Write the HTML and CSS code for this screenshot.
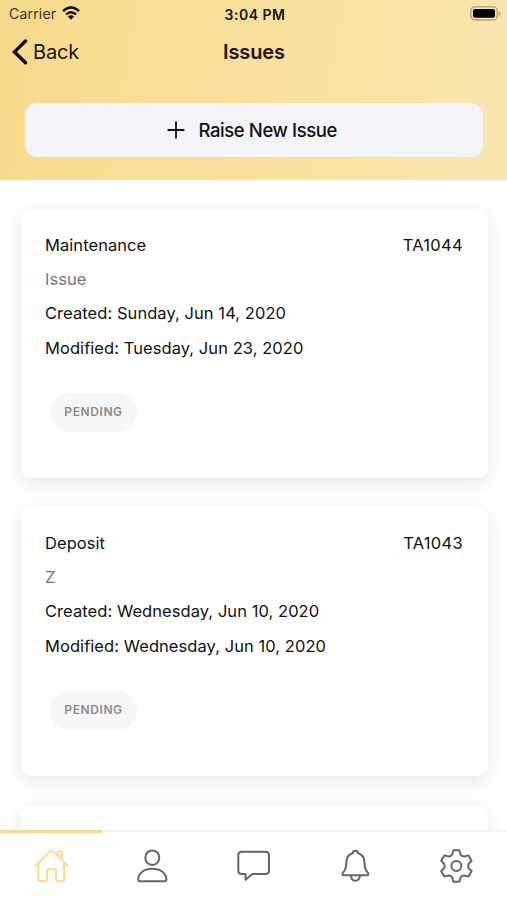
FILE: index.html
```html
<!DOCTYPE html>
<html lang="en">
<head>
<meta charset="utf-8">
<title>Issues</title>
<link rel="stylesheet" href="styles.css">
</head>
<body>
<div class="app">
  <header class="header">
    <div class="status">
      <div class="carrier"><span>Carrier</span>
        <svg width="18" height="14" viewBox="0 0 18 14"><g fill="none" stroke="#080600" stroke-width="2.5"><path d="M1 5.1Q9-2.1 17 5.1"/><path d="M4 8.4Q9 4 14 8.4"/></g><path d="M6 10.6Q9 8 12 10.6L9 13.7Z" fill="#080600"/></svg>
      </div>
      <div class="time">3:04 PM</div>
      <svg class="battery" width="31" height="15" viewBox="0 0 31 15"><rect x=".8" y=".8" width="26.4" height="13.2" rx="4" fill="none" stroke="#b3a477" stroke-width="1.3"/><rect x="3" y="3" width="22" height="8.8" rx="2" fill="#000"/><path d="M28.5 5.2Q30.5 6 30.5 7.4T28.5 9.6Z" fill="#b3a477"/></svg>
    </div>
    <div class="titlebar">
      <div class="back">
        <svg width="16" height="26" viewBox="0 0 16 26"><path d="M13.5 2L2.5 12.9L13.5 23.8" fill="none" stroke="#080600" stroke-width="3.4" stroke-linecap="round" stroke-linejoin="miter"/></svg>
        <span>Back</span>
      </div>
      <h1 class="title">Issues</h1>
      <div></div>
    </div>
    <button class="raise">
      <svg width="18" height="18" viewBox="0 0 18 18"><path d="M9 .6V17.4M.6 9H17.4" stroke="#111" stroke-width="1.8"/></svg>
      <span>Raise New Issue</span>
    </button>
  </header>
  <main class="list">
    <article class="card">
      <div class="row"><span class="kind">Maintenance</span><span class="ref">TA1044</span></div>
      <div class="row note"><span>Issue</span></div>
      <div class="row"><span>Created: Sunday, Jun 14, 2020</span></div>
      <div class="row"><span>Modified: Tuesday, Jun 23, 2020</span></div>
      <span class="badge">PENDING</span>
    </article>
    <article class="card">
      <div class="row"><span class="kind">Deposit</span><span class="ref">TA1043</span></div>
      <div class="row note"><span>Z</span></div>
      <div class="row"><span>Created: Wednesday, Jun 10, 2020</span></div>
      <div class="row"><span>Modified: Wednesday, Jun 10, 2020</span></div>
      <span class="badge">PENDING</span>
    </article>
    <article class="card"></article>
  </main>
  <nav class="tabs">
    <a class="tab active"><svg viewBox="0 0 36 36"><path d="M5.5 15.8V31.3Q5.5 33 7.2 33H12.2Q14 33 14 31.2V23Q14 21.3 15.7 21.3H21.4Q23.1 21.3 23.1 23V31.2Q23.1 33 24.9 33H29.5Q31.2 33 31.2 31.3V15.8M2.4 17.8L17 3.4Q18.5 2 20 3.4L34.6 17.8M24.7 7.4V4.8Q24.7 3.2 26.3 3.2H27.5Q29.1 3.2 29.1 4.8V11.9"/></svg></a>
    <a class="tab"><svg viewBox="0 0 36 36"><ellipse cx="18.3" cy="9.7" rx="7" ry="7.3"/><path d="M4.2 31.5C4.5 25 10 20.8 18.3 20.8S32.1 25 32.4 31.5Q32.4 33.2 30.8 33.2H5.8Q4.2 33.2 4.2 31.5Z"/></svg></a>
    <a class="tab"><svg viewBox="0 0 36 36"><path d="M6.8 3.8H30.5Q34 3.8 34 7.3V22.6Q34 26.1 30.5 26.1H17.4L10.6 31.8V26.1H6.8Q3.3 26.1 3.3 22.6V7.3Q3.3 3.8 6.8 3.8Z"/></svg></a>
    <a class="tab"><svg viewBox="0 0 36 36"><path d="M6.7 27.2C5 27.2 5 25.4 6.3 24.3C8.7 22 9.2 18.5 9.4 13.7C9.6 9.2 12 6.3 15.8 5.2C16 1.8 20.8 1.8 21 5.2C24.8 6.3 27.2 9.2 27.4 13.7C27.6 18.5 28.1 22 30.5 24.3C31.8 25.4 31.8 27.2 30.1 27.2ZM13.9 27.5C14.2 34.4 22.6 34.4 22.9 27.5"/></svg></a>
    <a class="tab"><svg viewBox="0 0 36 36"><circle cx="18.4" cy="18" r="5"/><path d="M15.4 2.2H21.4L22.6 6.6Q24 8.6 26.3 8.5L30.5 7.4L33.6 12.8L30.6 16Q29.6 18 30.6 20L33.6 23.2L30.5 28.6L26.3 27.5Q24 27.4 22.6 29.4L21.4 33.8H15.4L14.2 29.4Q12.8 27.4 10.5 27.5L6.3 28.6L3.2 23.2L6.2 20Q7.2 18 6.2 16L3.2 12.8L6.3 7.4L10.5 8.5Q12.8 8.6 14.2 6.6Z"/></svg></a>
  </nav>
</div>
</body>
</html>
```
FILE: styles.css
```css
* { box-sizing: border-box; }
body { margin: 0; font-family: Inter, "Liberation Sans", sans-serif; color: #111; }
.app { height: 900px; display: flex; flex-direction: column; overflow: hidden; background: #fff; }
.header { height: 180px; flex: none; background: linear-gradient(100deg, #f8da8c 0%, #f9e09b 48%, #fae6b1 100%); }
.status { height: 28px; padding: 0 6px 0 9px; display: grid; grid-template-columns: 1fr auto 1fr; align-items: center; font-size: 14px; color: #3b331d; }
.carrier { display: flex; align-items: center; gap: 6px; letter-spacing: .2px; margin-top: -1px; }
.carrier svg { margin-top: -2px; }
.time { font-weight: 600; color: #181408; font-size: 14px; letter-spacing: .5px; }
.battery { justify-self: end; margin-top: -2px; }
.titlebar { height: 48px; padding: 0 11px 0 12px; display: grid; grid-template-columns: 1fr auto 1fr; align-items: center; color: #181408; }
.back { display: flex; align-items: center; gap: 5px; font-size: 20px; letter-spacing: -.15px; }
.title { margin: 0; font-size: 20px; font-weight: 600; letter-spacing: -.1px; }
.raise { display: flex; align-items: center; justify-content: center; gap: 13px; width: 457.5px; height: 54px; margin: 26.5px 0 0 25px; padding: 0 3px 0 0; border: 0; border-radius: 12px; background: #f3f5fa; color: #111; font: 500 18.5px Inter, sans-serif; letter-spacing: -.4px; }
.list { flex: 1; min-height: 0; overflow: hidden; padding: 29px 19.5px 0 20.5px; display: flex; flex-direction: column; gap: 29px; }
.card { flex: none; height: 269px; padding: 19px 24.5px; border-radius: 10px; background: #fff; box-shadow: 0 5px 20px rgba(0, 0, 0, .1); }
.row { height: 34.2px; display: flex; align-items: center; justify-content: space-between; font-size: 16.5px; letter-spacing: .06px; }
.ref { letter-spacing: .3px; }
.note { color: #777; }
.badge { display: flex; width: 87px; height: 39px; margin: 28px 0 0 5px; padding-bottom: 2px; align-items: center; justify-content: center; border-radius: 20px; background: #f7f7f7; color: #8a8b8d; font-size: 12px; font-weight: 600; letter-spacing: .6px; }
.tabs { position: relative; height: 70px; flex: none; display: grid; grid-template-columns: repeat(5, 1fr); background: #fff; border-top: 2px solid #f5f5f5; }
.tab { display: flex; justify-content: center; padding-top: 16px; }
.tab svg { width: 36px; height: 36px; fill: none; stroke: #666; stroke-width: 2; stroke-linejoin: round; stroke-linecap: round; }
.tab.active { margin-top: -2px; margin-right: -.6px; padding-top: 15px; border-top: 3px solid #f9da88; }
.tab.active svg { stroke: #fadb88; }
```
